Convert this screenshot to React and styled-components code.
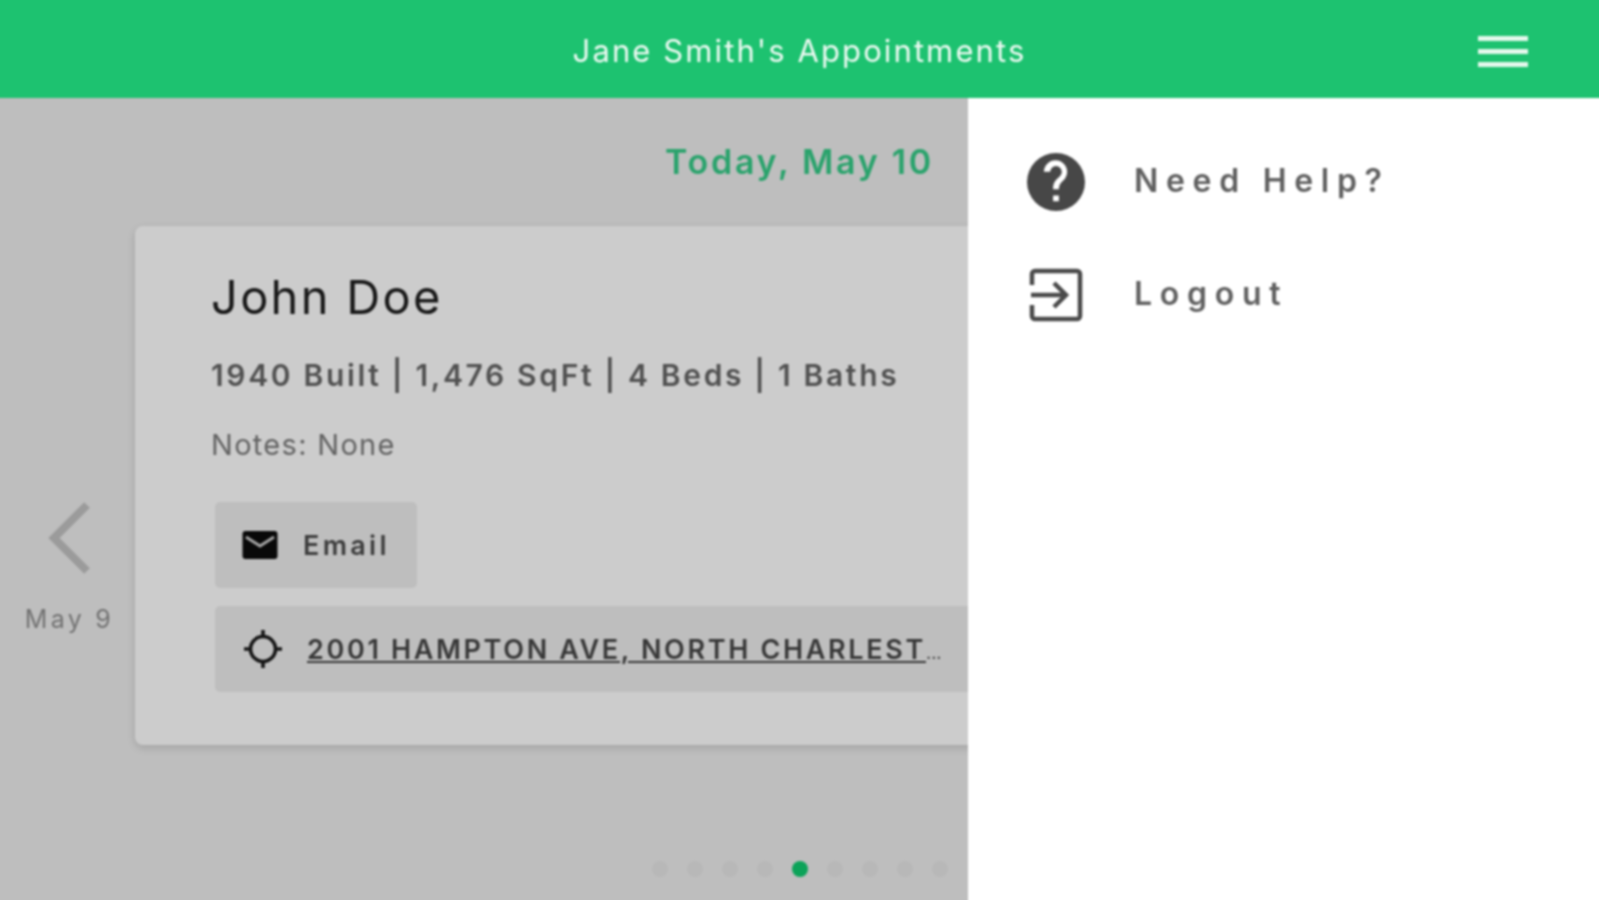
import React from "react";
import styled, { createGlobalStyle } from "styled-components";

const Global = createGlobalStyle`
  html, body { margin: 0; padding: 0; height: 100%; }
  body { font-family: Inter, "Open Sans", sans-serif; background: #bcbcbc; overflow: hidden; }
  * { box-sizing: border-box; }
`;

/* Runs 4px past the window on every side so the soft focus does not fade at the edges. */
const Page = styled.div`
  position: relative;
  width: 1607px;
  height: 908px;
  margin: -4px;
  overflow: hidden;
  background: #eeeeee;
  display: flex;
  flex-direction: column;
  filter: blur(1.2px);
`;

const Header = styled.header`
  position: relative;
  z-index: 3;
  flex: none;
  height: 102px;
  padding-top: 4px;
  background: #1dc270;
  display: flex;
  align-items: center;
  justify-content: center;
  color: #eefaf3;
  font-size: 31px;
  font-weight: 400;
`;

const Title = styled.div`
  letter-spacing: 2.1px;
  margin-top: 3px;
`;

const Burger = styled.button`
  position: absolute;
  right: 75px;
  top: 40px;
  width: 50px;
  height: 31px;
  padding: 0;
  border: 0;
  background: none;
  display: flex;
  flex-direction: column;
  justify-content: space-between;
`;

const BurgerLine = styled.span`
  height: 5px;
  background: #e4f8ec;
`;

const Main = styled.main`
  flex: 1;
  display: flex;
  flex-direction: column;
  align-items: center;
`;

const DateTitle = styled.h2`
  margin: 44px 0 0;
  height: 40px;
  line-height: 40px;
  font-size: 34px;
  font-weight: 600;
  letter-spacing: 2.7px;
  color: #35cc88;
`;

const Carousel = styled.div`
  align-self: stretch;
  margin-top: 44px;
  display: flex;
  align-items: flex-start;
`;

const Nav = styled.div`
  width: 139px;
  flex: none;
  padding: 275px 0 0 4px;
  display: flex;
  flex-direction: column;
  align-items: center;
  color: #8f8f8f;
`;

const NavLabel = styled.span`
  margin: 29px 0 0 4px;
  font-size: 25px;
  letter-spacing: 3.3px;
`;

const Card = styled.article`
  flex: 1;
  height: 519px;
  margin-right: 139px;
  padding: 47px 76px 0;
  background: #fff;
  border-radius: 8px;
  box-shadow: 0 3px 8px rgba(0, 0, 0, 0.14);
`;

const Name = styled.h3`
  margin: 0;
  height: 48px;
  line-height: 48px;
  font-size: 47px;
  font-weight: 400;
  letter-spacing: 2.3px;
  color: #1f1f1f;
`;

const Specs = styled.p`
  margin: 34px 0 0;
  line-height: 40px;
  font-size: 30px;
  font-weight: 600;
  letter-spacing: 2.65px;
  color: #666;
`;

const Notes = styled.p`
  margin: 30px 0 0;
  line-height: 40px;
  font-size: 29px;
  letter-spacing: 1.3px;
  color: #7c7c7c;
`;

const ActionRow = styled.div`
  display: flex;
  align-items: center;
  height: 86px;
  margin-left: 4px;
  background: #eeeeee;
  border-radius: 5px;
  color: #4c4c4c;
`;

const EmailButton = styled(ActionRow)`
  width: 202px;
  margin-top: 37px;
  padding-left: 27px;
  gap: 25px;
  font-size: 27px;
  font-weight: 600;
  letter-spacing: 3.3px;
`;

const AddressRow = styled(ActionRow)`
  margin-top: 18px;
  padding-left: 28px;
  gap: 24px;
`;

const Address = styled.a`
  white-space: nowrap;
  font-size: 27px;
  font-weight: 600;
  letter-spacing: 2.65px;
  text-decoration: underline;
  color: #474747;
`;

const AddressEllipsis = styled.span`
  font-size: 18px;
  letter-spacing: 0;
  color: #474747;
`;

const Dots = styled.div`
  position: absolute;
  left: 0;
  right: 0;
  bottom: 27px;
  display: flex;
  justify-content: center;
  gap: 19px;
`;

const Dot = styled.span`
  width: 16px;
  height: 16px;
  border-radius: 50%;
  background: ${(p) => (p.$active ? "#10cc70" : "#e7e7e7")};
`;

const Scrim = styled.div`
  position: absolute;
  inset: 102px 0 0 0;
  background: rgba(0, 0, 0, 0.2);
  z-index: 1;
`;

const Drawer = styled.aside`
  position: absolute;
  z-index: 2;
  top: 102px;
  right: 0;
  bottom: 0;
  width: 635px;
  background: #fff;
  padding: 55px 0 0 59px;
  display: flex;
  flex-direction: column;
  gap: 55px;
`;

const DrawerItem = styled.div`
  display: flex;
  align-items: center;
  height: 58px;
  gap: 49px;
  font-size: 32px;
  font-weight: 600;
  letter-spacing: 7.7px;
  color: #606060;
`;

const DrawerLabel = styled.span`
  margin-bottom: 4px;
`;

const IconSlot = styled.span`
  width: 58px;
  height: 58px;
  flex: none;
  display: flex;
  align-items: center;
  justify-content: center;
`;

const NavArrow = styled.svg`
  margin-left: 5px;
`;

const Chevron = () => (
  <NavArrow width="46" height="74" viewBox="0 0 46 74" fill="none">
    <path d="M40 4 L7 37 L40 70" stroke="#c2c2c2" strokeWidth="8" />
  </NavArrow>
);

const MailIcon = () => (
  <svg width="36" height="30" viewBox="0 0 36 30">
    <rect x="0.5" y="1" width="35" height="28" rx="3" fill="#0c0c0c" />
    <path d="M4 7 L18 16 L32 7" fill="none" stroke="#cfcfcf" strokeWidth="3" />
  </svg>
);

const TargetIcon = () => (
  <svg width="40" height="40" viewBox="0 0 40 40" fill="none" stroke="#1c1c1c" strokeWidth="3.6">
    <circle cx="20" cy="20" r="12.5" />
    <path d="M20 1v7M20 32v7M1 20h7M32 20h7" />
  </svg>
);

const HelpIcon = () => (
  <svg width="58" height="58" viewBox="0 0 24 24">
    <path
      fill="#474747"
      d="M12 0a12 12 0 1 0 0 24a12 12 0 0 0 0-24zm1.2 20h-2.4v-2.4h2.4V20zm2.5-9.3l-1.1 1.1c-.9.9-1.4 1.6-1.4 3.2h-2.4v-.6c0-1.3.5-2.5 1.4-3.4l1.5-1.5c.4-.4.7-1 .7-1.7a2.4 2.4 0 0 0-4.8 0H7a4.8 4.8 0 0 1 9.6 0c0 1.1-.4 2-.9 2.9z"
    />
  </svg>
);

const LogoutIcon = () => (
  <svg width="54" height="54" viewBox="0 0 54 54" fill="none" stroke="#4a4a4a" strokeWidth="4.5">
    <path d="M3 17V6a3 3 0 0 1 3-3h42a3 3 0 0 1 3 3v42a3 3 0 0 1-3 3H6a3 3 0 0 1-3-3V37" />
    <path d="M2 27h34M25 15l12 12l-12 12" />
  </svg>
);

export default function App() {
  return (
    <>
      <Global />
      <Page>
        <Header>
          <Title>Jane Smith's Appointments</Title>
          <Burger aria-label="Menu">
            <BurgerLine />
            <BurgerLine />
            <BurgerLine />
          </Burger>
        </Header>
        <Main>
          <DateTitle>Today, May 10</DateTitle>
          <Carousel>
            <Nav>
              <Chevron />
              <NavLabel>May 9</NavLabel>
            </Nav>
            <Card>
              <Name>John Doe</Name>
              <Specs>1940 Built | 1,476 SqFt | 4 Beds | 1 Baths</Specs>
              <Notes>Notes: None</Notes>
              <EmailButton>
                <MailIcon />
                Email
              </EmailButton>
              <AddressRow>
                <TargetIcon />
                <span>
                  <Address>2001 HAMPTON AVE, NORTH CHARLEST</Address>
                  <AddressEllipsis>...</AddressEllipsis>
                </span>
              </AddressRow>
            </Card>
          </Carousel>
          <Dots>
            {[0, 1, 2, 3, 4, 5, 6, 7, 8].map((i) => (
              <Dot key={i} $active={i === 4} />
            ))}
          </Dots>
        </Main>
        <Scrim />
        <Drawer>
          <DrawerItem>
            <IconSlot><HelpIcon /></IconSlot>
            <DrawerLabel>Need Help?</DrawerLabel>
          </DrawerItem>
          <DrawerItem>
            <IconSlot><LogoutIcon /></IconSlot>
            <DrawerLabel>Logout</DrawerLabel>
          </DrawerItem>
        </Drawer>
      </Page>
    </>
  );
}
